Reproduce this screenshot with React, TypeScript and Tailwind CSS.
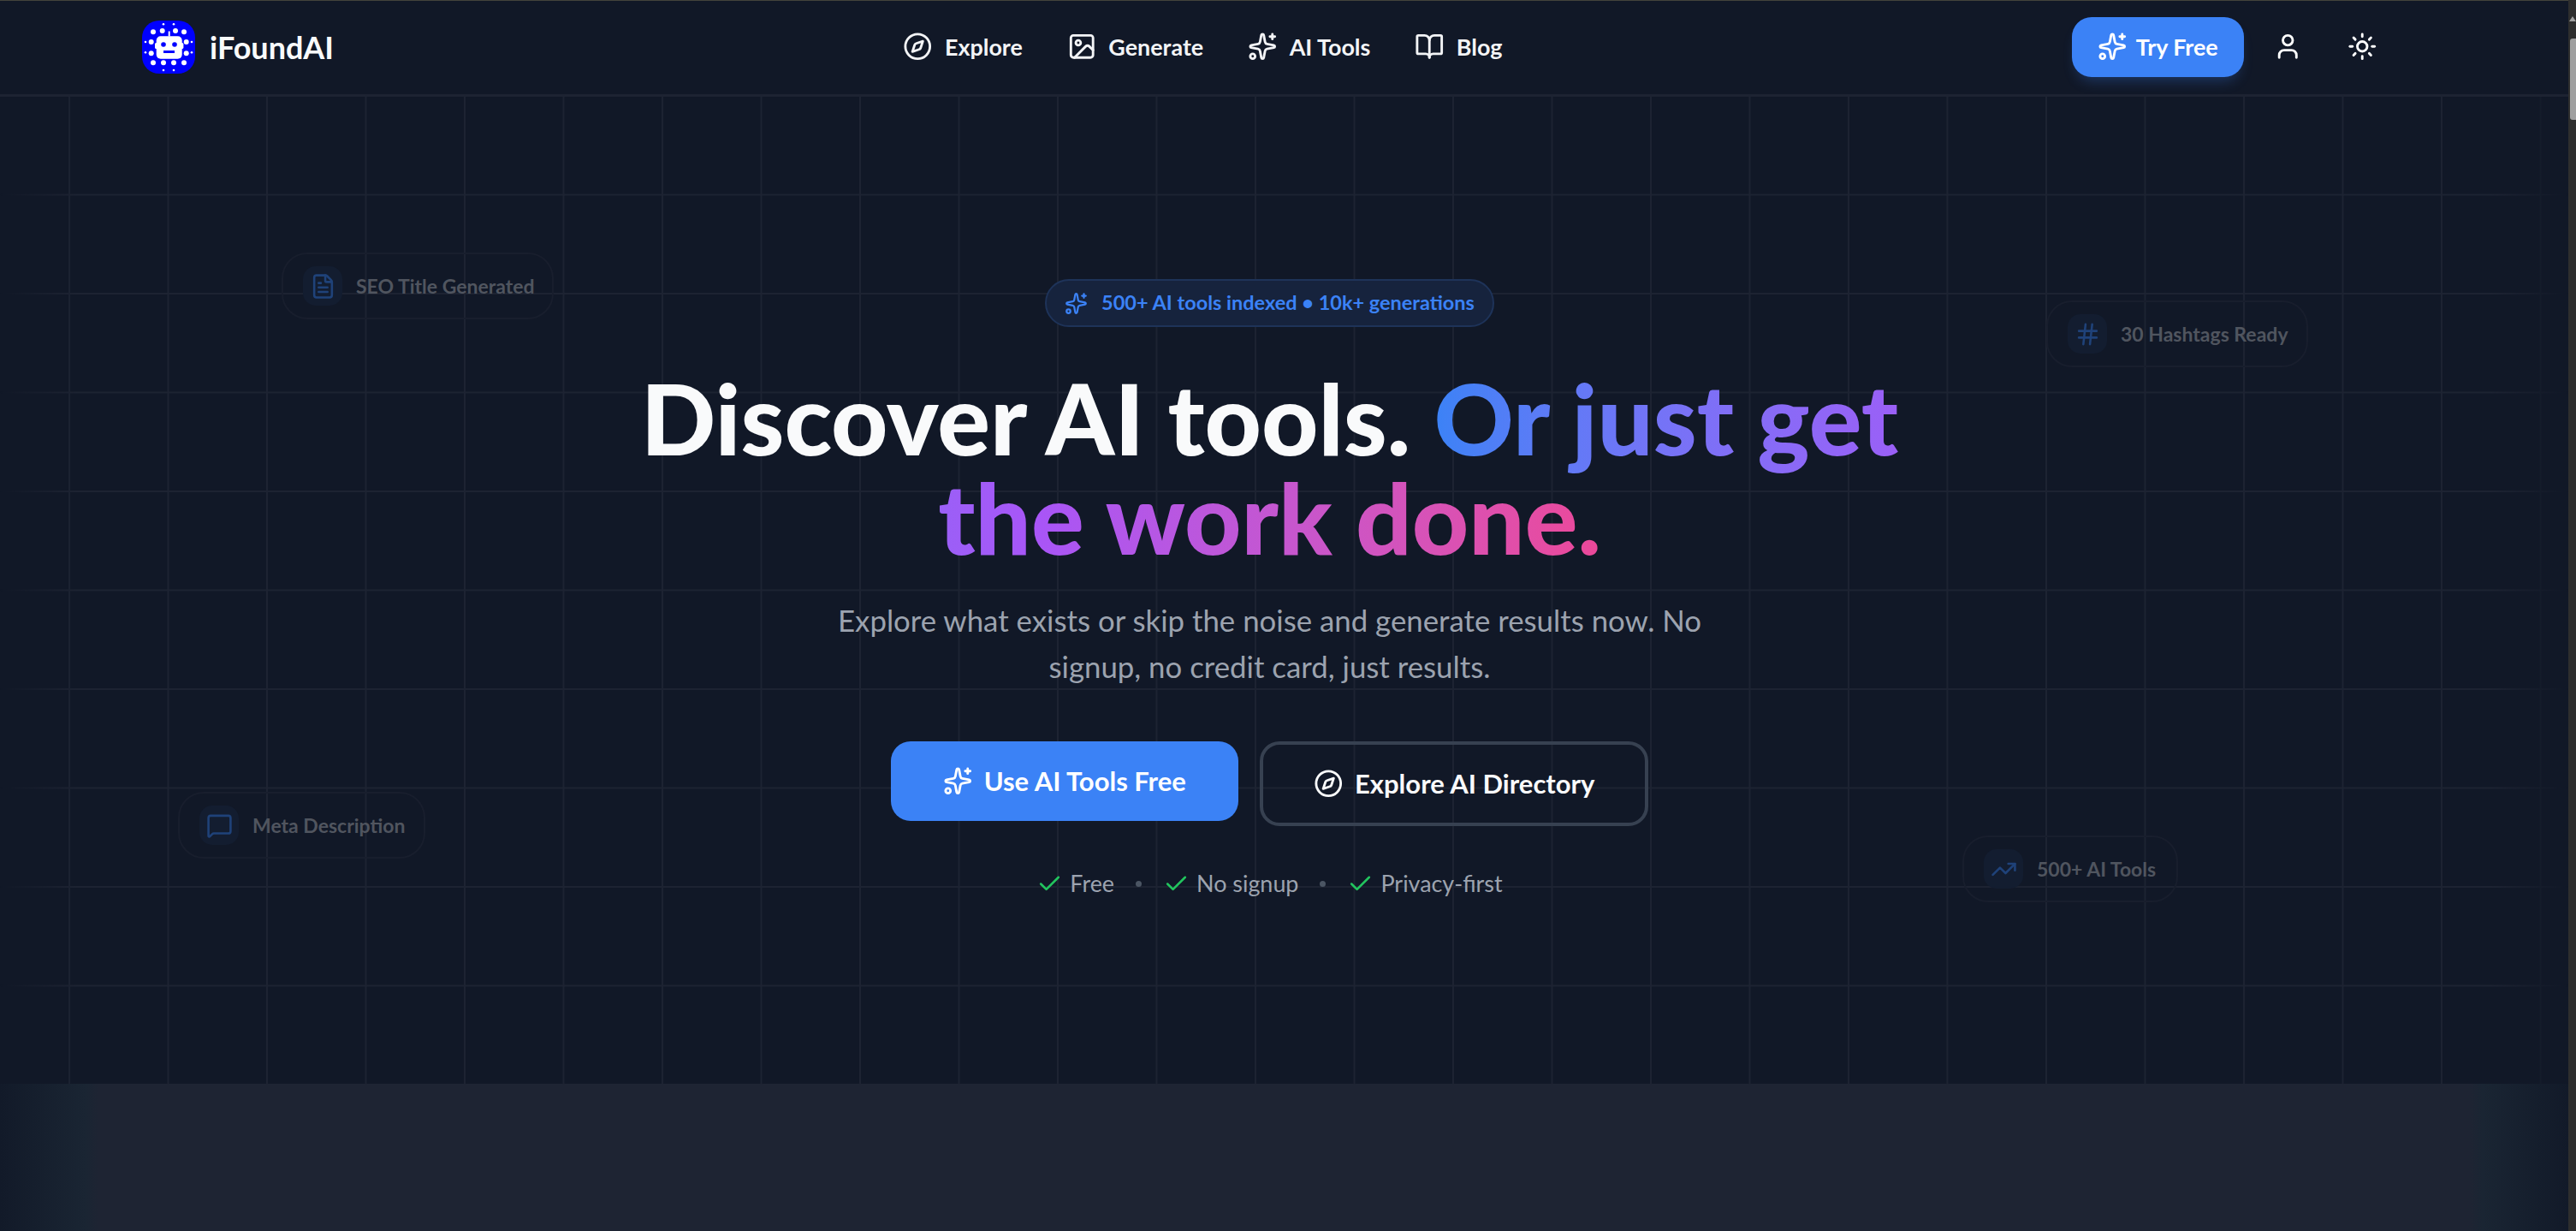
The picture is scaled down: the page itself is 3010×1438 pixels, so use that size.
import {
  BookOpen,
  Check,
  Compass,
  FileText,
  Hash,
  Image,
  LucideIcon,
  MessageSquare,
  Sparkles,
  Sun,
  TrendingUp,
  User,
} from "lucide-react";

const navLinks: { label: string; icon: LucideIcon }[] = [
  { label: "Explore", icon: Compass },
  { label: "Generate", icon: Image },
  { label: "AI Tools", icon: Sparkles },
  { label: "Blog", icon: BookOpen },
];

function Logo() {
  const big = [
    [13, 13.3], [23.7, 12], [39, 12], [49, 13.3],
    [10.7, 25], [51.7, 25], [10.7, 38.3], [51.7, 38.3],
    [13, 49.3], [25, 49.3], [37, 49.3], [49, 49.3],
  ];
  const small = [
    [25, 4.3], [37, 4.3], [4, 25], [58, 25],
    [4, 37.3], [58, 37.3], [25, 58], [37, 58],
  ];
  return (
    <svg width="62" height="62" viewBox="0 0 62 62" className="shrink-0">
      <rect width="62" height="62" rx="20" fill="#0000ff" />
      {big.map(([cx, cy]) => (
        <circle key={`${cx}-${cy}`} cx={cx} cy={cy} r="3" fill="#fff" />
      ))}
      {small.map(([cx, cy]) => (
        <circle key={`${cx}-${cy}`} cx={cx} cy={cy} r="1.3" fill="#fff" />
      ))}
      <rect x="30.7" y="12.5" width="2" height="6" fill="#fff" />
      <rect x="15" y="26" width="33.4" height="7" rx="1.5" fill="#fff" />
      <rect x="16.7" y="18.3" width="30" height="26.4" rx="5" fill="#fff" />
      <circle cx="25" cy="28" r="2.8" fill="#0000ff" />
      <circle cx="38" cy="28" r="2.8" fill="#0000ff" />
      <rect x="25" y="35" width="13" height="3" fill="#0000ff" />
    </svg>
  );
}

function Header() {
  return (
    <header className="flex h-[112px] shrink-0 items-center justify-between border-b-[3px] border-[#1d2332] pb-[2px] pl-[166px] pr-[223px]">
      <div className="flex items-center gap-[17px]">
        <Logo />
        <span className="text-[36px] font-bold text-[#f9fafb]">iFoundAI</span>
      </div>
      <nav className="flex items-center gap-[52px]">
        {navLinks.map(({ label, icon: NavIcon }) => (
          <a key={label} className="flex items-center gap-[14px] text-[26.9px] font-bold text-[#f3f4f6]">
            <NavIcon size={34.5} />
            <span className="pt-[2px]">{label}</span>
          </a>
        ))}
      </nav>
      <div className="flex items-center">
        <button className="flex h-[70px] w-[201px] items-center justify-center gap-[10px] rounded-[23px] bg-[#3b82f6] text-[26.9px] font-bold text-white shadow-[0_10px_16px_-6px_rgba(59,130,246,0.3)]">
          <Sparkles size={34.5} />
          <span className="pt-[2px]">Try Free</span>
        </button>
        <User size={34.5} className="ml-[34px] text-white" />
        <Sun size={34.5} className="ml-[53px] text-white" />
      </div>
    </header>
  );
}

function FloatCard({
  className,
  icon: CardIcon,
  label,
}: {
  className: string;
  icon: LucideIcon;
  label: string;
}) {
  return (
    <div className={`absolute flex h-[78px] items-center gap-[16px] rounded-[30px] border-2 border-[#181e2d] pl-[23px] ${className}`}>
      <div className="flex h-[46px] w-[46px] items-center justify-center rounded-[15px] bg-[#131d30] text-[#1f4279]">
        <CardIcon size={31} />
      </div>
      <span className="text-[23px] font-bold text-[#50555f]">{label}</span>
    </div>
  );
}

function Hero() {
  return (
    <section className="relative flex h-[1153px] shrink-0 flex-col items-center pr-[34px] pt-[213px]">
      <div className="absolute inset-0 bg-[linear-gradient(to_right,#1d2332_2px,transparent_2px),linear-gradient(to_bottom,#1d2332_2px,transparent_2px)] bg-[size:115.5px_115.5px] bg-[position:80px_-2px] [mask-image:linear-gradient(90deg,transparent,black_3%,black_97%,transparent)]" />

      <FloatCard className="left-[329px] top-[182px] w-[318px]" icon={FileText} label="SEO Title Generated" />
      <FloatCard className="left-[208px] top-[812px] w-[289px]" icon={MessageSquare} label="Meta Description" />
      <FloatCard className="left-[2391px] top-[238px] w-[306px]" icon={Hash} label="30 Hashtags Ready" />
      <FloatCard className="left-[2293px] top-[863px] w-[252px]" icon={TrendingUp} label="500+ AI Tools" />

      <div className="relative flex h-[56px] w-[525px] items-center justify-center gap-[16px] rounded-full border-2 border-[#1e3359] bg-[#16233d] text-[23.5px] font-bold text-[#3b82f6]">
        <Sparkles size={27} />
        500+ AI tools indexed • 10k+ generations
      </div>

      <h1 className="relative mt-[48px] w-[1600px] text-center text-[115.2px] font-black leading-[115.5px] text-[#f9fafb]">
        Discover AI tools.{" "}
        <span className="bg-gradient-to-r from-[#3b82f6] via-[#a855f7] to-[#ec4899] bg-clip-text text-transparent">
          Or just get the work done.
        </span>
      </h1>

      <p className="relative mt-[37px] w-[1106px] text-center text-[34.8px] leading-[54px] text-[#9ca3af]">
        Explore what exists or skip the noise and generate results now. No signup, no credit card, just results.
      </p>

      <div className="relative mt-[60px] flex items-start gap-[25px]">
        <button className="flex h-[93px] w-[406px] items-center justify-center gap-[13px] rounded-[23px] bg-[#3b82f6] text-[31px] font-bold text-white">
          <Sparkles size={34.5} />
          Use AI Tools Free
        </button>
        <button className="flex h-[99px] w-[454px] items-center justify-center gap-[14px] rounded-[23px] border-[4px] border-[#374151] text-[31px] font-bold text-[#f9fafb]">
          <Compass size={34.5} />
          Explore AI Directory
        </button>
      </div>

      <div className="relative mt-[47px] flex items-center gap-[25px] text-[26.9px] text-[#9ca3af]">
        <span className="flex items-center gap-[8px]">
          <Check size={31} className="text-[#22c55e]" />
          Free
        </span>
        <span className="h-[7px] w-[7px] rounded-full bg-[#4b5563]" />
        <span className="flex items-center gap-[8px]">
          <Check size={31} className="text-[#22c55e]" />
          No signup
        </span>
        <span className="h-[7px] w-[7px] rounded-full bg-[#4b5563]" />
        <span className="flex items-center gap-[8px]">
          <Check size={31} className="text-[#22c55e]" />
          Privacy-first
        </span>
      </div>
    </section>
  );
}

export default function App() {
  return (
    <div className="flex h-[1438px] w-[3010px] overflow-hidden bg-[#111827] font-['Lato',sans-serif]">
      <main className="flex min-w-0 flex-1 flex-col">
        <div className="h-[1px] shrink-0 bg-[#44443c]" />
        <Header />
        <Hero />
        <div className="flex-1 bg-[linear-gradient(90deg,#121a29,#1a2533_100px,#1e2433_115px,#1e2433_calc(100%-115px),#1a2533_calc(100%-100px),#121a29)]" />
      </main>
      <div className="relative w-[9px] shrink-0 bg-[#2e2e2e]">
        <svg width="9" height="9" viewBox="0 0 9 9" className="absolute left-0 top-[17px]">
          <path d="M1 8 L5 2 L9 8 Z" fill="#9f9f9f" />
        </svg>
        <div className="absolute left-[2px] right-0 top-[45px] h-[95px] rounded-l-[3px] bg-[#9f9f9f]" />
      </div>
    </div>
  );
}
